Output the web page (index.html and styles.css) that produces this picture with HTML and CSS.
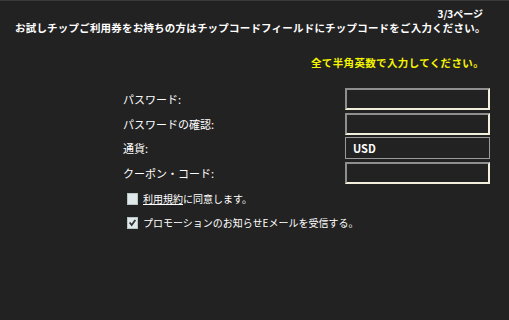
FILE: index.html
```html
<!DOCTYPE html>
<html lang="ja">
<head>
<meta charset="utf-8">
<link rel="stylesheet" href="styles.css">
</head>
<body>
<div class="page">
  <div class="pager">3/3ページ</div>
  <div class="notice">お試しチップご利用券をお持ちの方はチップコードフィールドにチップコードをご入力ください。</div>
  <div class="hint">全て半角英数で入力してください。</div>
  <div class="form">
    <label class="label">パスワード:</label>
    <span class="field"></span>
    <label class="label">パスワードの確認:</label>
    <span class="field"></span>
    <label class="label">通貨:</label>
    <span class="field static">USD</span>
    <label class="label">クーポン・コード:</label>
    <span class="field"></span>
  </div>
  <div class="checks">
    <div class="check-row">
      <span class="box"></span>
      <span class="check-text"><span class="link">利用規約</span>に同意します。</span>
    </div>
    <div class="check-row">
      <span class="box"><svg viewBox="0 0 11 11" width="11" height="11"><path d="M2 5.5 L4.5 8.5 L9 2.5" fill="none" stroke="#333" stroke-width="2.2"/></svg></span>
      <span class="check-text">プロモーションのお知らせEメールを受信する。</span>
    </div>
  </div>
</div>
</body>
</html>
```

FILE: styles.css
```css
html, body {
  margin: 0;
  padding: 0;
  background: #222222;
}
body {
  font-family: "Noto Sans CJK JP", "Noto Sans", sans-serif;
  color: #ffffff;
}
.page {
  border-top: 1px solid #3a3a3a;
  height: 319px;
  box-sizing: border-box;
}
.pager {
  text-align: right;
  padding-right: 26px;
  margin-top: 7px;
  font-size: 10px;
  font-weight: bold;
  line-height: 11px;
}
.notice {
  margin-top: 2px;
  padding-left: 15px;
  font-size: 10.5px;
  font-weight: bold;
  line-height: 13px;
  letter-spacing: 0.2px;
  white-space: nowrap;
}
.hint {
  text-align: right;
  padding-right: 25px;
  margin-top: 22px;
  font-size: 10.5px;
  font-weight: bold;
  line-height: 13px;
  letter-spacing: 0.35px;
  color: #f5f500;
}
.form {
  display: grid;
  grid-template-columns: 222px 145px;
  grid-auto-rows: 22px;
  row-gap: 2.5px;
  margin-top: 19px;
  padding-left: 123px;
  align-items: center;
}
.label {
  font-size: 11px;
  line-height: 14px;
  white-space: nowrap;
}
.field {
  box-sizing: border-box;
  height: 22px;
  border-style: solid;
  border-width: 2px;
  border-color: #8f8f8f #f2efdc #f2efdc #8f8f8f;
  background: #222222;
}
.field.static {
  border: 1px solid #9a9a9a;
  font-size: 11px;
  font-weight: bold;
  line-height: 20px;
  padding-left: 7px;
}
.checks {
  margin-top: 9px;
  padding-left: 127px;
  display: flex;
  flex-direction: column;
  row-gap: 12px;
}
.check-row {
  display: flex;
  align-items: center;
  height: 12px;
}
.box {
  box-sizing: border-box;
  width: 11px;
  height: 12px;
  background: #dfe9ea;
  border: 1px solid #b8c4c6;
  display: flex;
  align-items: center;
  justify-content: center;
}
.box svg {
  display: block;
}
.check-text {
  margin-left: 5px;
  font-size: 10px;
  line-height: 12px;
  white-space: nowrap;
}
.link {
  text-decoration: underline;
}
```
